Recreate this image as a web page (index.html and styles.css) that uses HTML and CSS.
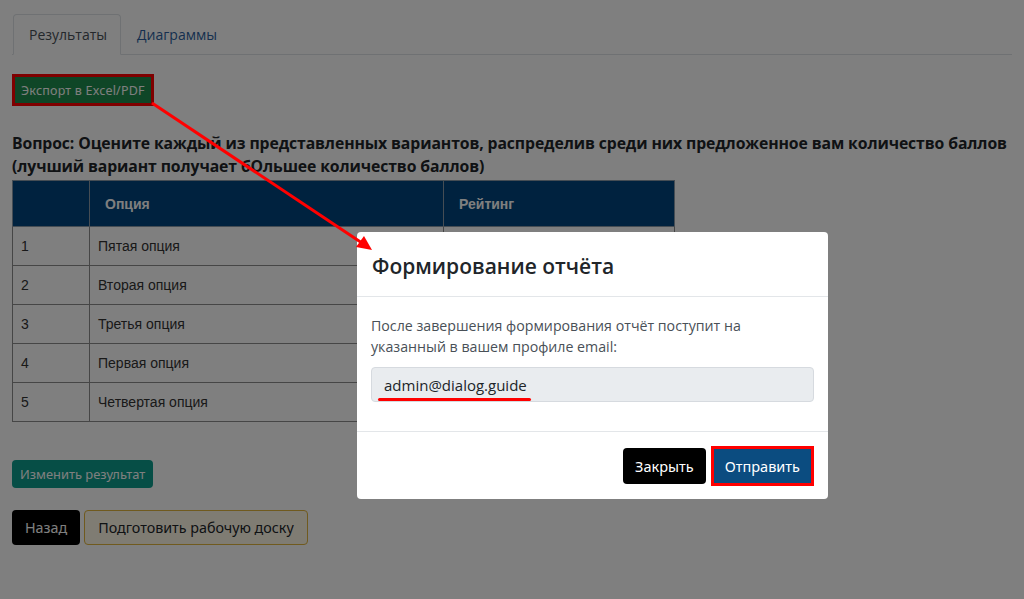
FILE: index.html
```html
<!DOCTYPE html>
<html lang="ru">
<head>
<meta charset="utf-8">
<link rel="stylesheet" href="styles.css">
</head>
<body>
<div class="page">
  <ul class="tabs">
    <li class="tab active">Результаты</li>
    <li class="tab">Диаграммы</li>
  </ul>
  <div class="export-wrap"><button class="btn btn-export">Экспорт в Excel/PDF</button></div>
  <h3 class="question">Вопрос: Оцените каждый из представленных вариантов, распределив среди них предложенное вам количество баллов (лучший вариант получает бОльшее количество баллов)</h3>
  <table class="results">
    <thead>
      <tr><th class="c1"></th><th class="c2">Опция</th><th class="c3">Рейтинг</th></tr>
    </thead>
    <tbody>
      <tr><td>1</td><td>Пятая опция</td><td></td></tr>
      <tr><td>2</td><td>Вторая опция</td><td></td></tr>
      <tr><td>3</td><td>Третья опция</td><td></td></tr>
      <tr><td>4</td><td>Первая опция</td><td></td></tr>
      <tr><td>5</td><td>Четвертая опция</td><td></td></tr>
    </tbody>
  </table>
  <div class="edit-row"><button class="btn btn-teal">Изменить результат</button></div>
  <div class="action-row">
    <button class="btn btn-black">Назад</button>
    <button class="btn btn-board">Подготовить рабочую доску</button>
  </div>
</div>
<div class="backdrop"></div>
<div class="modal">
  <div class="modal-header"><h5 class="modal-title">Формирование отчёта</h5></div>
  <div class="modal-body">
    <p class="modal-text">После завершения формирования отчёт поступит на указанный в вашем профиле email:</p>
    <div class="email-field"><span class="email">admin@dialog.guide</span></div>
  </div>
  <div class="modal-footer">
    <button class="btn btn-black btn-lg">Закрыть</button>
    <button class="btn btn-send">Отправить</button>
  </div>
</div>
<svg class="arrow" width="1024" height="599" viewBox="0 0 1024 599">
  <line x1="152" y1="103" x2="362" y2="243" stroke="#ff0000" stroke-width="3"/>
  <polygon points="372,250 356,247 364,236" fill="#ff0000"/>
</svg>
</body>
</html>
```

FILE: styles.css
```css
* { box-sizing: border-box; }
html, body { margin: 0; padding: 0; background: #ffffff; }
body { width: 1024px; height: 599px; overflow: hidden; position: relative; font-family: "Open Sans", "Noto Sans", sans-serif; color: #212529; }

.page { padding: 14px 12px 0 12px; }

.tabs { list-style: none; margin: 0; padding: 0; display: flex; border-bottom: 1px solid #dee2e6; width: 1000px; }
.tab { font-size: 14px; padding: 10px 15px 9px 15px; margin-bottom: -1px; border: 1px solid transparent; border-radius: 4px 4px 0 0; color: #2c5f9e; line-height: 20px; }
.tab.active { color: #495057; background: #fff; border-color: #dee2e6 #dee2e6 #fff; margin-left: 1px; padding-right: 13px; }

.btn { font-family: "Noto Sans", "Open Sans", sans-serif; border: 1px solid transparent; border-radius: 4px; cursor: pointer; }

.export-wrap { margin-top: 22px; padding-left: 3px; }
.btn-export { background: #1f8c4e; color: #fff; font-size: 12.5px; height: 26px; padding: 0 5px; border-radius: 0; outline: 3px solid #ff0000; letter-spacing: 0.2px; }

.question { font-family: "Open Sans", sans-serif; font-weight: 700; font-size: 15.75px; line-height: 23px; margin: 29px 0 0 0; color: #212529; width: 1000px; letter-spacing: -0.1px; }

.results { border-collapse: collapse; width: 663px; margin-top: 2px; font-family: "Liberation Sans", Arial, sans-serif; font-size: 14px; }
.results th { background: #00457f; color: #fff; font-weight: 700; text-align: left; height: 46px; padding: 0 8px 0 15px; border: 1px solid #8a9aa8; font-size: 14px; }
.results th.c1 { width: 77px; }
.results th.c2 { width: 354px; }
.results td { height: 39px; border: 1px solid #8c8c8c; padding: 0 8px 0 8px; color: #333; }

.edit-row { margin-top: 38px; }
.btn-teal { background: #0c9c8c; color: #fff; font-size: 12.9px; height: 28px; padding: 0 7px; }

.action-row { margin-top: 22px; display: flex; gap: 4px; }
.btn-black { background: #000; color: #fff; font-size: 14.3px; height: 35px; padding: 0 12px; }
.btn-board { background: #fff8e6; color: #212529; border-color: #e0b43c; font-size: 14.3px; height: 35px; padding: 0 13px; }

.backdrop { position: absolute; inset: 0; background: rgba(0, 0, 0, 0.5); }

.modal { position: absolute; left: 357px; top: 232px; width: 471px; height: 267px; background: #fff; border-radius: 4px; display: flex; flex-direction: column; font-family: "Open Sans", sans-serif; }
.modal-header { height: 65px; padding: 0 15px; display: flex; align-items: center; border-bottom: 1px solid #e3e6e9; }
.modal-title { margin: 0; font-size: 21px; font-weight: 600; color: #212529; padding-top: 3px; }
.modal-body { padding: 16px 14px 0 14px; height: 135px; border-bottom: 1px solid #e3e6e9; }
.modal-text { margin: 0; font-size: 14.2px; line-height: 21px; color: #495057; padding-top: 2px; max-width: 420px; }
.email-field { margin-top: 10px; height: 35px; background: #e9ecef; border: 1px solid #d6dadf; border-radius: 4px; padding: 0 12px; display: flex; align-items: center; }
.email { font-size: 15px; color: #212529; position: relative; }
.email::after { content: ""; position: absolute; left: -6px; right: -4px; bottom: -6px; height: 3px; background: #ff0000; border-radius: 2px; }
.modal-footer { flex: 1; display: flex; justify-content: flex-end; align-items: center; gap: 8px; padding: 0 17px 0 0; }
.btn-lg { height: 36px; padding: 0 11px; font-size: 14.5px; }
.btn-send { background: #0b4c80; color: #fff; font-size: 14.5px; height: 34px; padding: 0 10px; border-radius: 0; outline: 3px solid #ff0000; }

.arrow { position: absolute; left: 0; top: 0; pointer-events: none; }
```
